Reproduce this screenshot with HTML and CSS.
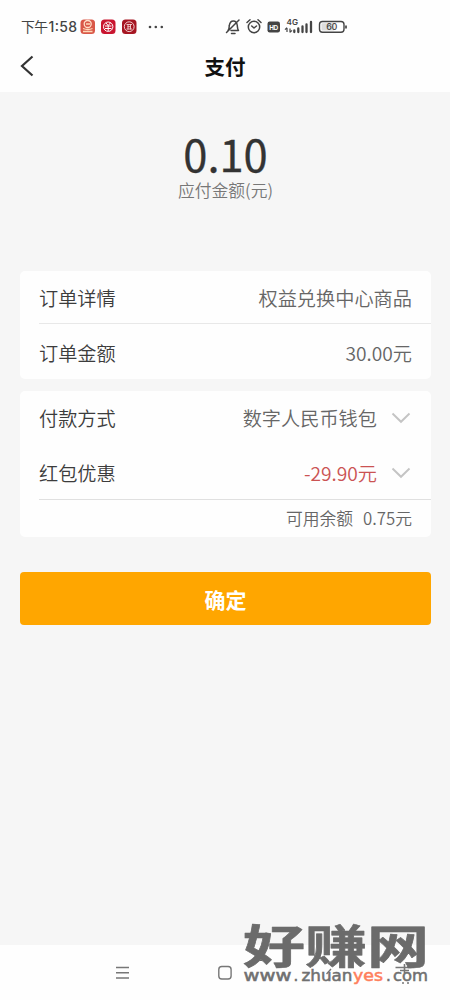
FILE: index.html
```html
<!DOCTYPE html>
<html lang="zh-CN">
<head>
<meta charset="utf-8">
<title>支付</title>
<link rel="stylesheet" href="styles.css">
</head>
<body>
<div class="screen">
  <header class="top">
    <svg class="status" width="450" height="46" viewBox="0 0 450 46">
      <text class="clock" x="21" y="32" textLength="27">下午</text>
      <text class="time" x="48.500" y="32" textLength="28.500">1:58</text>
      <g>
        <rect x="80.500" y="19.500" width="14.500" height="14.500" rx="3.500" fill="#d95848"/>
        <circle cx="87.700" cy="24" r="3.500" fill="none" stroke="#ffe0ca" stroke-width="1.300"/>
        <path d="M86 24h4M83 28.500q5 2 9.500 0M83 31.500h9.500" fill="none" stroke="#ffd9b8" stroke-width="1.300"/>
      </g>
      <g>
        <rect x="101" y="19.500" width="14.500" height="14.500" rx="3.500" fill="#c9152f"/>
        <circle cx="108.200" cy="26.700" r="4.700" fill="none" stroke="#fff" stroke-width="1"/>
        <path d="M106 23l2.200 2.500 2.200-2.500M105 26h6.500M105 28.500h6.500M108.200 25.500v5.500" fill="none" stroke="#fff" stroke-width="1"/>
      </g>
      <g>
        <rect x="122" y="19.500" width="14.500" height="14.500" rx="3.500" fill="#a61622"/>
        <circle cx="129.200" cy="26.700" r="4.900" fill="none" stroke="#f3cfcf" stroke-width="1"/>
        <path d="M126.500 24.500h5.500M126.500 29h5.500M127.500 26.700h3.500M128 24v5.500M130.500 24v5.500" fill="none" stroke="#f3cfcf" stroke-width=".9"/>
      </g>
      <g fill="#444"><circle cx="150" cy="27" r="1.300"/><circle cx="155.800" cy="27" r="1.300"/><circle cx="161.800" cy="27" r="1.300"/></g>
      <g fill="none" stroke="#444" stroke-width="1.500" stroke-linecap="round" stroke-linejoin="round">
        <path d="M228 30.500c1.500-1.700 1-3.500 1.300-5 .5-3 2-4.500 4-4.500s3.600 1.500 4 4.500c.2 1.500 0 3.300 1.200 5H231M226.500 32.500L239 20M231.500 33.500h3.500"/>
        <circle cx="254" cy="27" r="5.700"/>
        <path d="M247 22.500l3-2.700M258 19.800l3 2.700M251.700 26l2.300 2 2.500-2"/>
      </g>
      <rect x="267.500" y="21.500" width="12.500" height="11" rx="2.200" fill="#444"/>
      <text class="hd" x="269.300" y="29.500" textLength="9">HD</text>
      <text class="network" x="286.500" y="25" textLength="11.500" lengthAdjust="spacingAndGlyphs">4G</text>
      <path d="M287 32v-4M285 29.700l2-2M290 28.500v4M290 32.300l2-2" fill="none" stroke="#444" stroke-width="1.200"/>
      <path d="M294.300 30.500v1.500M298.300 28.500v3.500M302.500 26.500v5.500M306.500 24.500v7.500M311 22v10" fill="none" stroke="#444" stroke-width="2.300" stroke-linecap="round"/>
      <rect x="319.500" y="21.500" width="24.500" height="10.800" rx="3" fill="#fff" stroke="#444" stroke-width="1.400"/>
      <rect x="321.500" y="23.300" width="13" height="7.300" rx="1" fill="#ddd"/>
      <path d="M346 25.500v3" stroke="#444" stroke-width="1.700"/>
      <text class="battery" x="326.300" y="30.300" textLength="11">60</text>
    </svg>
    <div class="title-bar">
      <svg class="back" width="18" height="24" viewBox="0 0 18 24"><path d="M14.500 2.500L4 12l10.500 9.500"/></svg>
      <h1 class="title">支付</h1>
    </div>
  </header>
  <main class="content">
    <section class="total">
      <div class="amount">0.10</div>
      <div class="caption">应付金额(元)</div>
    </section>
    <section class="card order">
      <div class="row ruled"><span class="label">订单详情</span><span class="value">权益兑换中心商品</span></div>
      <div class="row"><span class="label">订单金额</span><span class="value">30.00元</span></div>
    </section>
    <section class="card payment">
      <div class="row"><span class="label">付款方式</span><span class="value">数字人民币钱包</span><svg class="chevron" width="20" height="12" viewBox="0 0 20 12"><path d="M1.500 1.500L10 9.800l8.500-8.300"/></svg></div>
      <div class="row ruled"><span class="label">红包优惠</span><span class="value discount">-29.90元</span><svg class="chevron" width="20" height="12" viewBox="0 0 20 12"><path d="M1.500 1.500L10 9.800l8.500-8.300"/></svg></div>
      <div class="balance"><span>可用余额</span><span>0.75元</span></div>
    </section>
    <button class="confirm">确定</button>
  </main>
  <footer class="nav">
    <svg width="450" height="55" viewBox="0 0 450 55">
      <g fill="none" stroke="#777" stroke-width="1.400">
        <path d="M116 22.500h13M116 27.700h13M116 33h13"/>
        <rect x="218.800" y="21.500" width="12.300" height="12.500" rx="3"/>
        <path d="M331 24l-4.500 5"/>
        <path d="M395.500 22.500h16M404.500 19v9M400 25.500h9M402 38h2M407 38h2" stroke-width="1.600"/>
      </g>
    </svg>
  </footer>
  <svg class="watermark" width="190" height="86" viewBox="240 904 190 86">
    <text class="site-name" x="243" y="962.500" textLength="186" lengthAdjust="spacingAndGlyphs">好赚网</text>
    <g class="site-url">
      <text x="243.500" y="981" textLength="48" lengthAdjust="spacingAndGlyphs">www</text>
      <text x="293.500" y="981">.</text>
      <text x="301.500" y="981" textLength="51" lengthAdjust="spacingAndGlyphs">zhuan</text>
      <text class="accent" x="353" y="981" textLength="30" lengthAdjust="spacingAndGlyphs">yes</text>
      <text x="386" y="981">.</text>
      <text x="393" y="981" textLength="35" lengthAdjust="spacingAndGlyphs">com</text>
    </g>
  </svg>
</div>
</body>
</html>
```
FILE: styles.css
```css
* { box-sizing: border-box; }
body { margin: 0; background: #f6f6f6; font-family: "Noto Sans CJK SC", sans-serif; }
svg { display: block; }
.screen { position: relative; display: flex; flex-direction: column; width: 450px; height: 1000px; overflow: hidden; background: #f6f6f6; }
.top { height: 92px; background: #fefefe; }
.status { fill: #444; }
.clock { font-size: 13.800px; font-weight: 400; }
.time { font: 500 14px Inter, sans-serif; }
.hd { font: bold 6.500px "Liberation Sans", sans-serif; fill: #fff; }
.network { font: 600 7.800px Inter, sans-serif; }
.battery { font: 500 9px Inter, sans-serif; }
.title-bar { display: grid; grid-template-columns: 60px 1fr 60px; align-items: center; height: 40px; }
.back { margin-left: 18px; }
.back path { fill: none; stroke: #333; stroke-width: 2.200; }
.title { margin: 0; text-align: center; font-size: 20.500px; line-height: 40px; font-weight: 700; color: #111; }
.content { flex: 1; padding: 0 19px 0 20px; }
.total { height: 179px; padding-top: 39px; text-align: center; }
.amount { font-size: 43.500px; line-height: 46px; color: #333; -webkit-text-stroke: .3px #333; }
.caption { padding-top: 1px; font-size: 16.800px; line-height: 24px; font-weight: 350; color: #777; }
.card { padding-left: 19px; border-radius: 5px; background: #fefefe; }
.order { height: 108px; margin-bottom: 12px; }
.payment { height: 146px; margin-bottom: 35px; }
.row { display: flex; align-items: center; height: 54px; padding-right: 19px; font-size: 19.200px; font-weight: 350; color: #3c3c3c; }
.ruled { border-bottom: 1px solid #e0e0e0; }
.order .row { height: 58px; }
.order .ruled { height: 53px; padding-top: 2px; border-bottom-color: #e8e8e8; }
.payment .row { padding-right: 20px; }
.payment .ruled { height: 55px; padding: 1px 20px 0 0; }
.label { flex: 1; }
.value { color: #666; }
.value.discount { color: #cb5353; }
.chevron { margin-left: 14px; }
.chevron path { fill: none; stroke: #c4c4c4; stroke-width: 1.900; }
.balance { display: flex; justify-content: flex-end; align-items: center; gap: 10px; height: 35px; padding-right: 19px; font-size: 16.800px; font-weight: 350; color: #666; }
.confirm { display: block; width: 100%; height: 53px; padding: 0; border: 0; border-radius: 4px; background: #ffa600; color: #fff; font: 700 21px "Noto Sans CJK SC", sans-serif; }
.nav { height: 55px; background: #fefefe; }
.watermark { position: absolute; left: 240px; top: 904px; overflow: visible; }
.site-name { font-size: 46px; font-weight: 700; fill: #6b6b6b; stroke: #6b6b6b; stroke-width: .6px; stroke-linejoin: round; }
.site-url { font: 15px "DejaVu Sans", sans-serif; fill: #707070; stroke: #707070; stroke-width: .5px; }
.site-url .accent { fill: #ff7f5c; stroke: #ff7f5c; }
```
